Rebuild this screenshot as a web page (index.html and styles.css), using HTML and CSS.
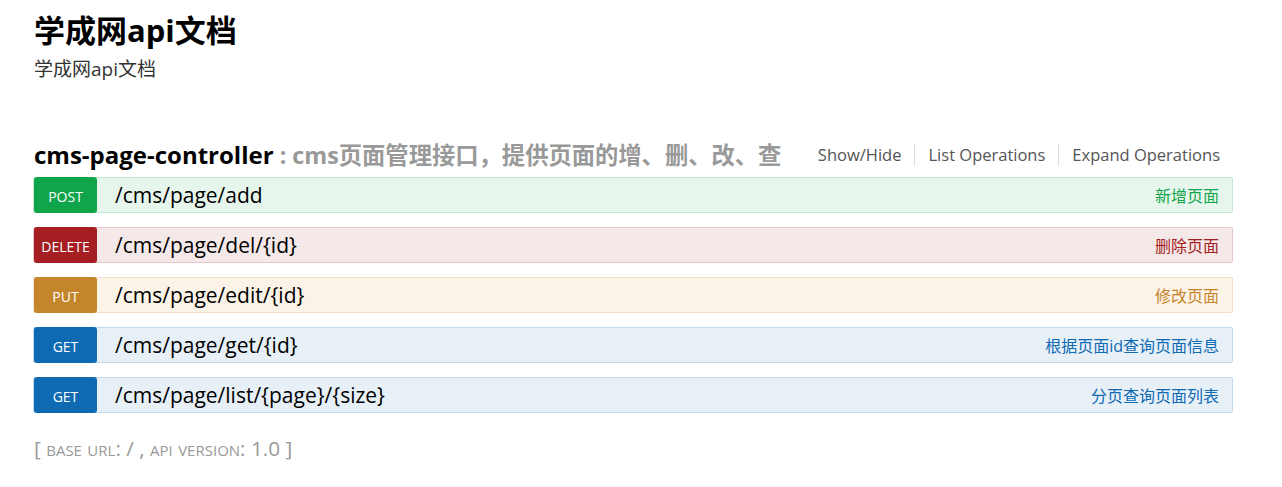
FILE: index.html
```html
<!DOCTYPE html>
<html lang="zh-CN">
<head>
<meta charset="utf-8">
<title>学成网api文档</title>
<link rel="stylesheet" href="styles.css">
</head>
<body>
<div class="wrap">
  <div class="info">
    <h1 class="info-title">学成网api文档</h1>
    <div class="info-desc">学成网api文档</div>
  </div>

  <div class="resource">
    <div class="resource-heading">
      <h2 class="resource-name"><span class="ctrl">cms-page-controller</span><span class="desc"> : cms页面管理接口，提供页面的增、删、改、查</span></h2>
      <ul class="options">
        <li>Show/Hide</li>
        <li>List Operations</li>
        <li>Expand Operations</li>
      </ul>
    </div>

    <ul class="operations">
      <li class="op post">
        <span class="method">POST</span>
        <span class="path">/cms/page/add</span>
        <span class="summary">新增页面</span>
      </li>
      <li class="op delete">
        <span class="method">DELETE</span>
        <span class="path">/cms/page/del/{id}</span>
        <span class="summary">删除页面</span>
      </li>
      <li class="op put">
        <span class="method">PUT</span>
        <span class="path">/cms/page/edit/{id}</span>
        <span class="summary">修改页面</span>
      </li>
      <li class="op get">
        <span class="method">GET</span>
        <span class="path">/cms/page/get/{id}</span>
        <span class="summary">根据页面id查询页面信息</span>
      </li>
      <li class="op get">
        <span class="method">GET</span>
        <span class="path">/cms/page/list/{page}/{size}</span>
        <span class="summary">分页查询页面列表</span>
      </li>
    </ul>
  </div>

  <div class="footer">[ <span class="sc">base url</span>: / , <span class="sc">api version</span>: 1.0 ]</div>
</div>
</body>
</html>
```

FILE: styles.css
```css
html, body {
  margin: 0;
  padding: 0;
  background: #fff;
}
body {
  font-family: "Open Sans", "Noto Sans CJK SC", sans-serif;
  color: #000;
}
.wrap {
  width: 1200px;
  margin-left: 33px;
  padding-top: 8px;
}
.info-title {
  margin: 0;
  padding-left: 1px;
  font-size: 31px;
  font-weight: bold;
  line-height: 44px;
}
.info-desc {
  padding-left: 1px;
  font-size: 19px;
  line-height: 34px;
  color: #333;
}
.resource {
  margin-top: 51px;
}
.resource-heading {
  display: flex;
  justify-content: space-between;
  align-items: center;
  height: 40px;
  padding-bottom: 5px;
  box-sizing: border-box;
}
.resource-name {
  margin: 0;
  padding-left: 1px;
  font-size: 24px;
  font-weight: bold;
  line-height: 35px;
  white-space: nowrap;
}
.resource-name .ctrl {
  color: #000;
}
.resource-name .desc {
  color: #999;
  font-size: 23.3px;
}
.options {
  display: flex;
  list-style: none;
  margin: 0;
  padding: 0 13px 0 0;
}
.options li {
  font-size: 16.5px;
  color: #555;
  padding: 0 13px;
  border-right: 1px solid #ddd;
  line-height: 22px;
}
.options li:last-child {
  border-right: none;
  padding-right: 0;
}
.operations {
  list-style: none;
  margin: 0;
  padding: 0;
  display: flex;
  flex-direction: column;
  gap: 14px;
}
.op {
  display: flex;
  align-items: center;
  height: 34px;
  border: 1px solid;
  border-radius: 2px;
}
.method {
  width: 63px;
  height: 36px;
  margin: -1px 0 -1px 0;
  border-radius: 3px;
  color: #fff;
  font-size: 14px;
  display: flex;
  align-items: center;
  justify-content: center;
  padding-top: 2px;
  box-sizing: border-box;
}
.path {
  margin-left: 18px;
  font-size: 21px;
  flex: 1;
}
.summary {
  font-size: 16px;
  padding-right: 13px;
}
.post { background: #e7f6ec; border-color: #c3e8d1; }
.post .method { background: #10a54a; }
.post .summary { color: #10a54a; }
.delete { background: #f5e8e8; border-color: #e8c6c7; }
.delete .method { background: #a41e22; }
.delete .summary { color: #a41e22; }
.put { background: #fcf3e8; border-color: #f0e0ca; }
.put .method { background: #c5862b; }
.put .summary { color: #c5862b; }
.get { background: #e7f0f7; border-color: #c3d9ec; }
.get .method { background: #0f6ab4; }
.get .summary { color: #0f6ab4; }
.footer {
  margin-top: 20px;
  padding-left: 1px;
  font-size: 20.8px;
  color: #999;
  line-height: 30px;
}
.sc {
  font-variant: small-caps;
}
```
